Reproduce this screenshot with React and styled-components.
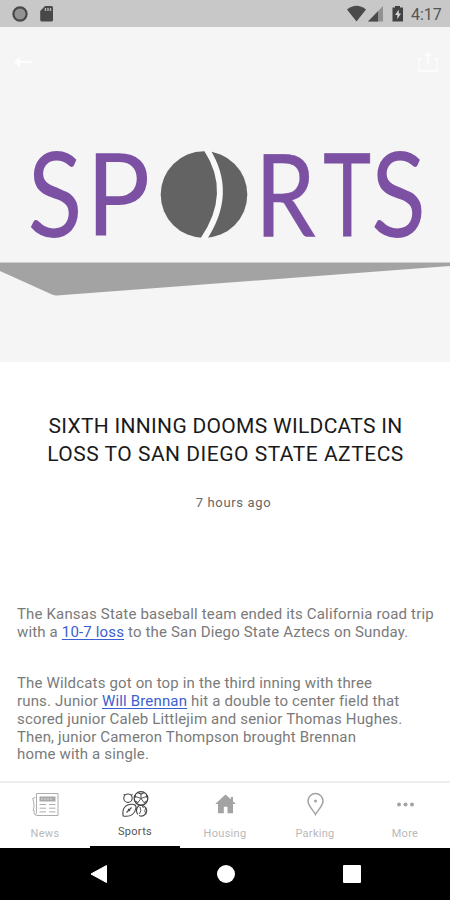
import React from 'react';
import styled, { createGlobalStyle } from 'styled-components';

const tabs = [
  { name: 'News', icon: 'news' },
  { name: 'Sports', icon: 'sports', active: true },
  { name: 'Housing', icon: 'housing' },
  { name: 'Parking', icon: 'parking' },
  { name: 'More', icon: 'more' }
];

const TabIcon = ({ name }) => {
  if (name === 'news') {
    return (
      <svg width="28" height="28" viewBox="0 0 28 28" fill="none" stroke="#adadad" strokeWidth="1">
        <path d="M5.5 3.5H27V25.5H5.5C3.5 25 2.5 23 3.3 20.5M5.5 3.5V22.5Q5.5 24.5 4 24.5M4.5 7.5L1.8 8.3L3 14V17L2.2 21" />
        <rect x="8.5" y="6.5" width="16" height="5" fill="#a9a9a9" stroke="none" />
        <path d="M8.5 14.5H15M18 14.5H24.5M8.5 18.2H15M18 18.2H24.5M8.5 21.9H15M18 21.9H24.5" />
        <path d="M10 9H22" stroke="#dedede" strokeDasharray="2 1" />
      </svg>
    );
  }
  if (name === 'sports') {
    return (
      <svg width="28" height="28" viewBox="0 0 28 28" fill="none" stroke="#444" strokeWidth="1.1">
        <circle cx="7" cy="8.2" r="4.2" />
        <path d="M4 5L2.6 4.4M10.3 5L11.6 4.4" />
        <circle cx="20" cy="8.4" r="6.8" strokeWidth="1.3" />
        <path d="M20 8.4V3.2M20 8.4L25.2 6.7M20 8.4L23.2 12.9M20 8.4L16.8 12.9M20 8.4L14.8 6.7" strokeWidth="0.9" />
        <path d="M17.2 2.8L20 4.2L22.8 2.8M14.2 11L16.8 12.6M23.2 12.6L25.8 11M14 5L14.8 7.5M26 5L25.2 7.5" />
        <path d="M2.2 26C.8 19 4 14.3 11 14.3Q15.5 14.3 15 18C14 23.5 10 27.5 2.2 26Z" />
        <path d="M5.5 22.5L10.5 17.5M7 19L9 21" />
        <path d="M17 16.5A5.3 5.3 0 1 1 18 25.5M17.5 16A6 6 0 0 0 17 24.5" />
        <path d="M19 17Q21 20.5 18.5 24M25 17.5Q22.5 20.5 25 24.5M21 15.5L22.5 18" strokeWidth="0.9" />
      </svg>
    );
  }
  if (name === 'housing') {
    return (
      <svg width="28" height="28" viewBox="0 0 28 28" fill="#a3a3a3">
        <path d="M14.5 4.4L25 14H22V23.3H16.5V16.8H12.8V23.3H7V14H4.2L14.5 4.4Z" />
        <path d="M19.8 7H22V11.5H19.8Z" />
      </svg>
    );
  }
  if (name === 'parking') {
    return (
      <svg width="28" height="28" viewBox="0 0 28 28" fill="none" stroke="#a3a3a3" strokeWidth="1.5">
        <path d="M14.5 24.5C12.5 20.3 7 16 7 11A7.5 7.5 0 0 1 22 11C22 16 16.5 20.3 14.5 24.5Z" />
        <circle cx="14.5" cy="11" r="1.5" fill="#a3a3a3" stroke="none" />
      </svg>
    );
  }
  return (
    <svg width="28" height="28" viewBox="0 0 28 28" fill="#a3a3a3">
      <circle cx="8" cy="14.5" r="2" />
      <circle cx="14.5" cy="14.5" r="2" />
      <circle cx="21" cy="14.5" r="2" />
    </svg>
  );
};

const StatusIcons = () => (
  <svg width="60" height="18" viewBox="0 0 60 18">
    <path d="M0 4.5Q9.5 -3 19 4.5L9.5 16.5Z" fill="#4a4a4a" />
    <path d="M36 1V16.5H21Z" fill="#919191" />
    <path d="M31 6.2V16.5H21Z" fill="#4a4a4a" />
    <path d="M48 1H53V2.5H56V16.5H45.5V2.5H48Z" fill="#424242" />
    <path d="M51.8 4.5L48 10H50.3V14.2L54 8.5H51.8Z" fill="#d0d0d0" />
  </svg>
);

const letters = [
  { char: 'S', x: 27.5, scaleX: 0.89, scaleY: 1.03, y: 237, stroke: 0 },
  { char: 'P', x: 86, scaleX: 0.94, scaleY: 1, y: 236, stroke: 0 },
  { char: 'R', x: 255, scaleX: 0.85, scaleY: 1, y: 236, stroke: 0.4 },
  { char: 'T', x: 323.3, scaleX: 0.71, scaleY: 1, y: 236, stroke: 0.8 },
  { char: 'S', x: 371, scaleX: 0.89, scaleY: 1.03, y: 237, stroke: 0 }
];

const SportsLogo = () => (
  <Logo viewBox="0 95 450 267">
    <path d="M0 262.5H450V266L60 295.3Q55 295.8 52 294.5L0 271Z" fill="#a3a3a3" />
    <g fill="#7c50a2" stroke="#7c50a2" fontFamily="Lato, sans-serif" fontSize="114">
      {letters.map(({ char, x, y, scaleX, scaleY, stroke }) => (
        <text
          key={x}
          transform={`translate(${x} ${y}) scale(${scaleX} ${scaleY})`}
          strokeWidth={stroke}>
          {char}
        </text>
      ))}
    </g>
    <circle cx="204" cy="194.6" r="43.3" fill="#636363" />
    <path d="M206.5 149Q235 193 203 240" fill="none" stroke="#f8f8f8" strokeWidth="5.8" />
  </Logo>
);

export default function App() {
  return (
    <>
      <GlobalStyle />
      <Screen>
        <StatusBar>
          <svg width="44" height="18" viewBox="0 0 44 18">
            <circle cx="8" cy="9" r="6.6" fill="#929292" stroke="#494949" strokeWidth="2.2" />
            <path d="M33 1H39.5Q41 1 41 2.5V15Q41 16.5 39.5 16.5H30Q28.2 16.5 28.2 15V6Z" fill="#484848" />
            <path d="M33.5 3V6M36 3V6M38.5 3V6" stroke="#b5b5b5" strokeWidth="1.4" />
          </svg>
          <StatusRight>
            <StatusIcons />
            <Clock>4:17</Clock>
          </StatusRight>
        </StatusBar>

        <Hero>
          <Toolbar>
            <svg width="20" height="20" viewBox="0 0 20 20" opacity="0.85">
              <path d="M1 10L7 4.5V8.7H18.5V11.3H7V15.5Z" fill="#fff" />
            </svg>
            <svg width="22" height="22" viewBox="0 0 22 22" opacity="0.7">
              <path d="M4 8H2V20H20V8H18M11 14V4M8 5L11 2L14 5" fill="none" stroke="#fff" strokeWidth="1.8" />
            </svg>
          </Toolbar>
          <SportsLogo />
        </Hero>

        <Article>
          <Title>
            <Line $spacing={0.3}>SIXTH INNING DOOMS WILDCATS IN</Line>
            <Line $spacing={0.5}>LOSS TO SAN DIEGO STATE AZTECS</Line>
          </Title>
          <Time>7 hours ago</Time>
          <Paragraph>
            The Kansas State baseball team ended its California road trip
            <br />
            with a <Link href="#">10-7 loss</Link> to the San Diego State Aztecs on Sunday.
          </Paragraph>
          <Paragraph>
            The Wildcats got on top in the third inning with three
            <br />
            runs. Junior <Link href="#">Will Brennan</Link> hit a double to center field that
            <br />
            scored junior Caleb Littlejim and senior Thomas Hughes.
            <br />
            Then, junior Cameron Thompson brought Brennan
            <br />
            home with a single.
          </Paragraph>
        </Article>

        <TabBar>
          {tabs.map((tab) => (
            <Tab key={tab.name} $active={tab.active}>
              <TabIcon name={tab.icon} />
              <span>{tab.name}</span>
            </Tab>
          ))}
        </TabBar>

        <SystemNav>
          <svg width="18" height="20" viewBox="0 0 18 20">
            <path d="M1 10L16.5 1.5V18.5Z" fill="#fff" stroke="#fff" strokeLinejoin="round" />
          </svg>
          <Home />
          <Recent />
        </SystemNav>
      </Screen>
    </>
  );
}

const GlobalStyle = createGlobalStyle`
  * {
    box-sizing: border-box;
  }
  body {
    margin: 0;
    background: #fff;
    font-family: Roboto, sans-serif;
  }
`;

const Screen = styled.div`
  display: flex;
  flex-direction: column;
  width: 450px;
  height: 900px;
  overflow: hidden;
  background: #fff;
`;

const StatusBar = styled.header`
  display: flex;
  align-items: center;
  justify-content: space-between;
  flex: none;
  height: 27px;
  padding: 0 8px 0 12px;
  background: #c8c8c8;
`;

const StatusRight = styled.div`
  display: flex;
  align-items: center;
  gap: 4px;
`;

const Clock = styled.span`
  width: 31px;
  padding-top: 2px;
  font-size: 16px;
  line-height: 25px;
  color: #555;
`;

const Hero = styled.section`
  flex: none;
  height: 335px;
  background: #f5f5f5;
`;

const Toolbar = styled.div`
  display: flex;
  align-items: center;
  justify-content: space-between;
  height: 68px;
  padding: 2px 11px 0 13px;
`;

const Logo = styled.svg`
  display: block;
  width: 450px;
  height: 267px;
`;

const Article = styled.main`
  flex: 1;
  min-height: 0;
  padding: 51px 0 0 17px;
`;

const Title = styled.h1`
  margin: 0 16px 0 0;
  font-size: 21px;
  font-weight: 400;
  line-height: 27.5px;
  text-align: center;
  color: #1a1a1a;
`;

const Line = styled.span`
  display: block;
  white-space: nowrap;
  letter-spacing: ${(props) => props.$spacing}px;
`;

const Time = styled.p`
  margin: 26px 0 95px;
  font-size: 13px;
  line-height: 17px;
  letter-spacing: 0.65px;
  text-align: center;
  color: #666;
`;

const Paragraph = styled.p`
  margin: 0 0 34px;
  font-size: 15px;
  line-height: 17.7px;
  letter-spacing: 0.16px;
  white-space: nowrap;
  color: #7a7a7a;
`;

const Link = styled.a`
  color: #3a5fcf;
  text-decoration: underline;
  text-decoration-thickness: 1px;
  text-underline-offset: 2px;
`;

const TabBar = styled.nav`
  display: grid;
  grid-template-columns: repeat(5, 1fr);
  flex: none;
  height: 67px;
  border-top: 2px solid #ededed;
`;

const Tab = styled.div`
  display: flex;
  flex-direction: column;
  align-items: center;
  gap: ${(props) => (props.$active ? '7px' : '9px')};
  padding-top: 7px;
  border-bottom: 2px solid ${(props) => (props.$active ? '#000' : '#fff')};
  font-size: 11px;
  line-height: 14px;
  letter-spacing: 0.3px;
  color: ${(props) => (props.$active ? '#555' : '#b8b8b8')};
`;

const SystemNav = styled.footer`
  display: flex;
  align-items: center;
  justify-content: space-between;
  flex: none;
  height: 52px;
  padding: 0 89px 0 90px;
  background: #000;
`;

const Home = styled.span`
  width: 18px;
  height: 18px;
  border-radius: 50%;
  background: #fff;
`;

const Recent = styled.span`
  width: 18px;
  height: 18px;
  border-radius: 1px;
  background: #fff;
`;
